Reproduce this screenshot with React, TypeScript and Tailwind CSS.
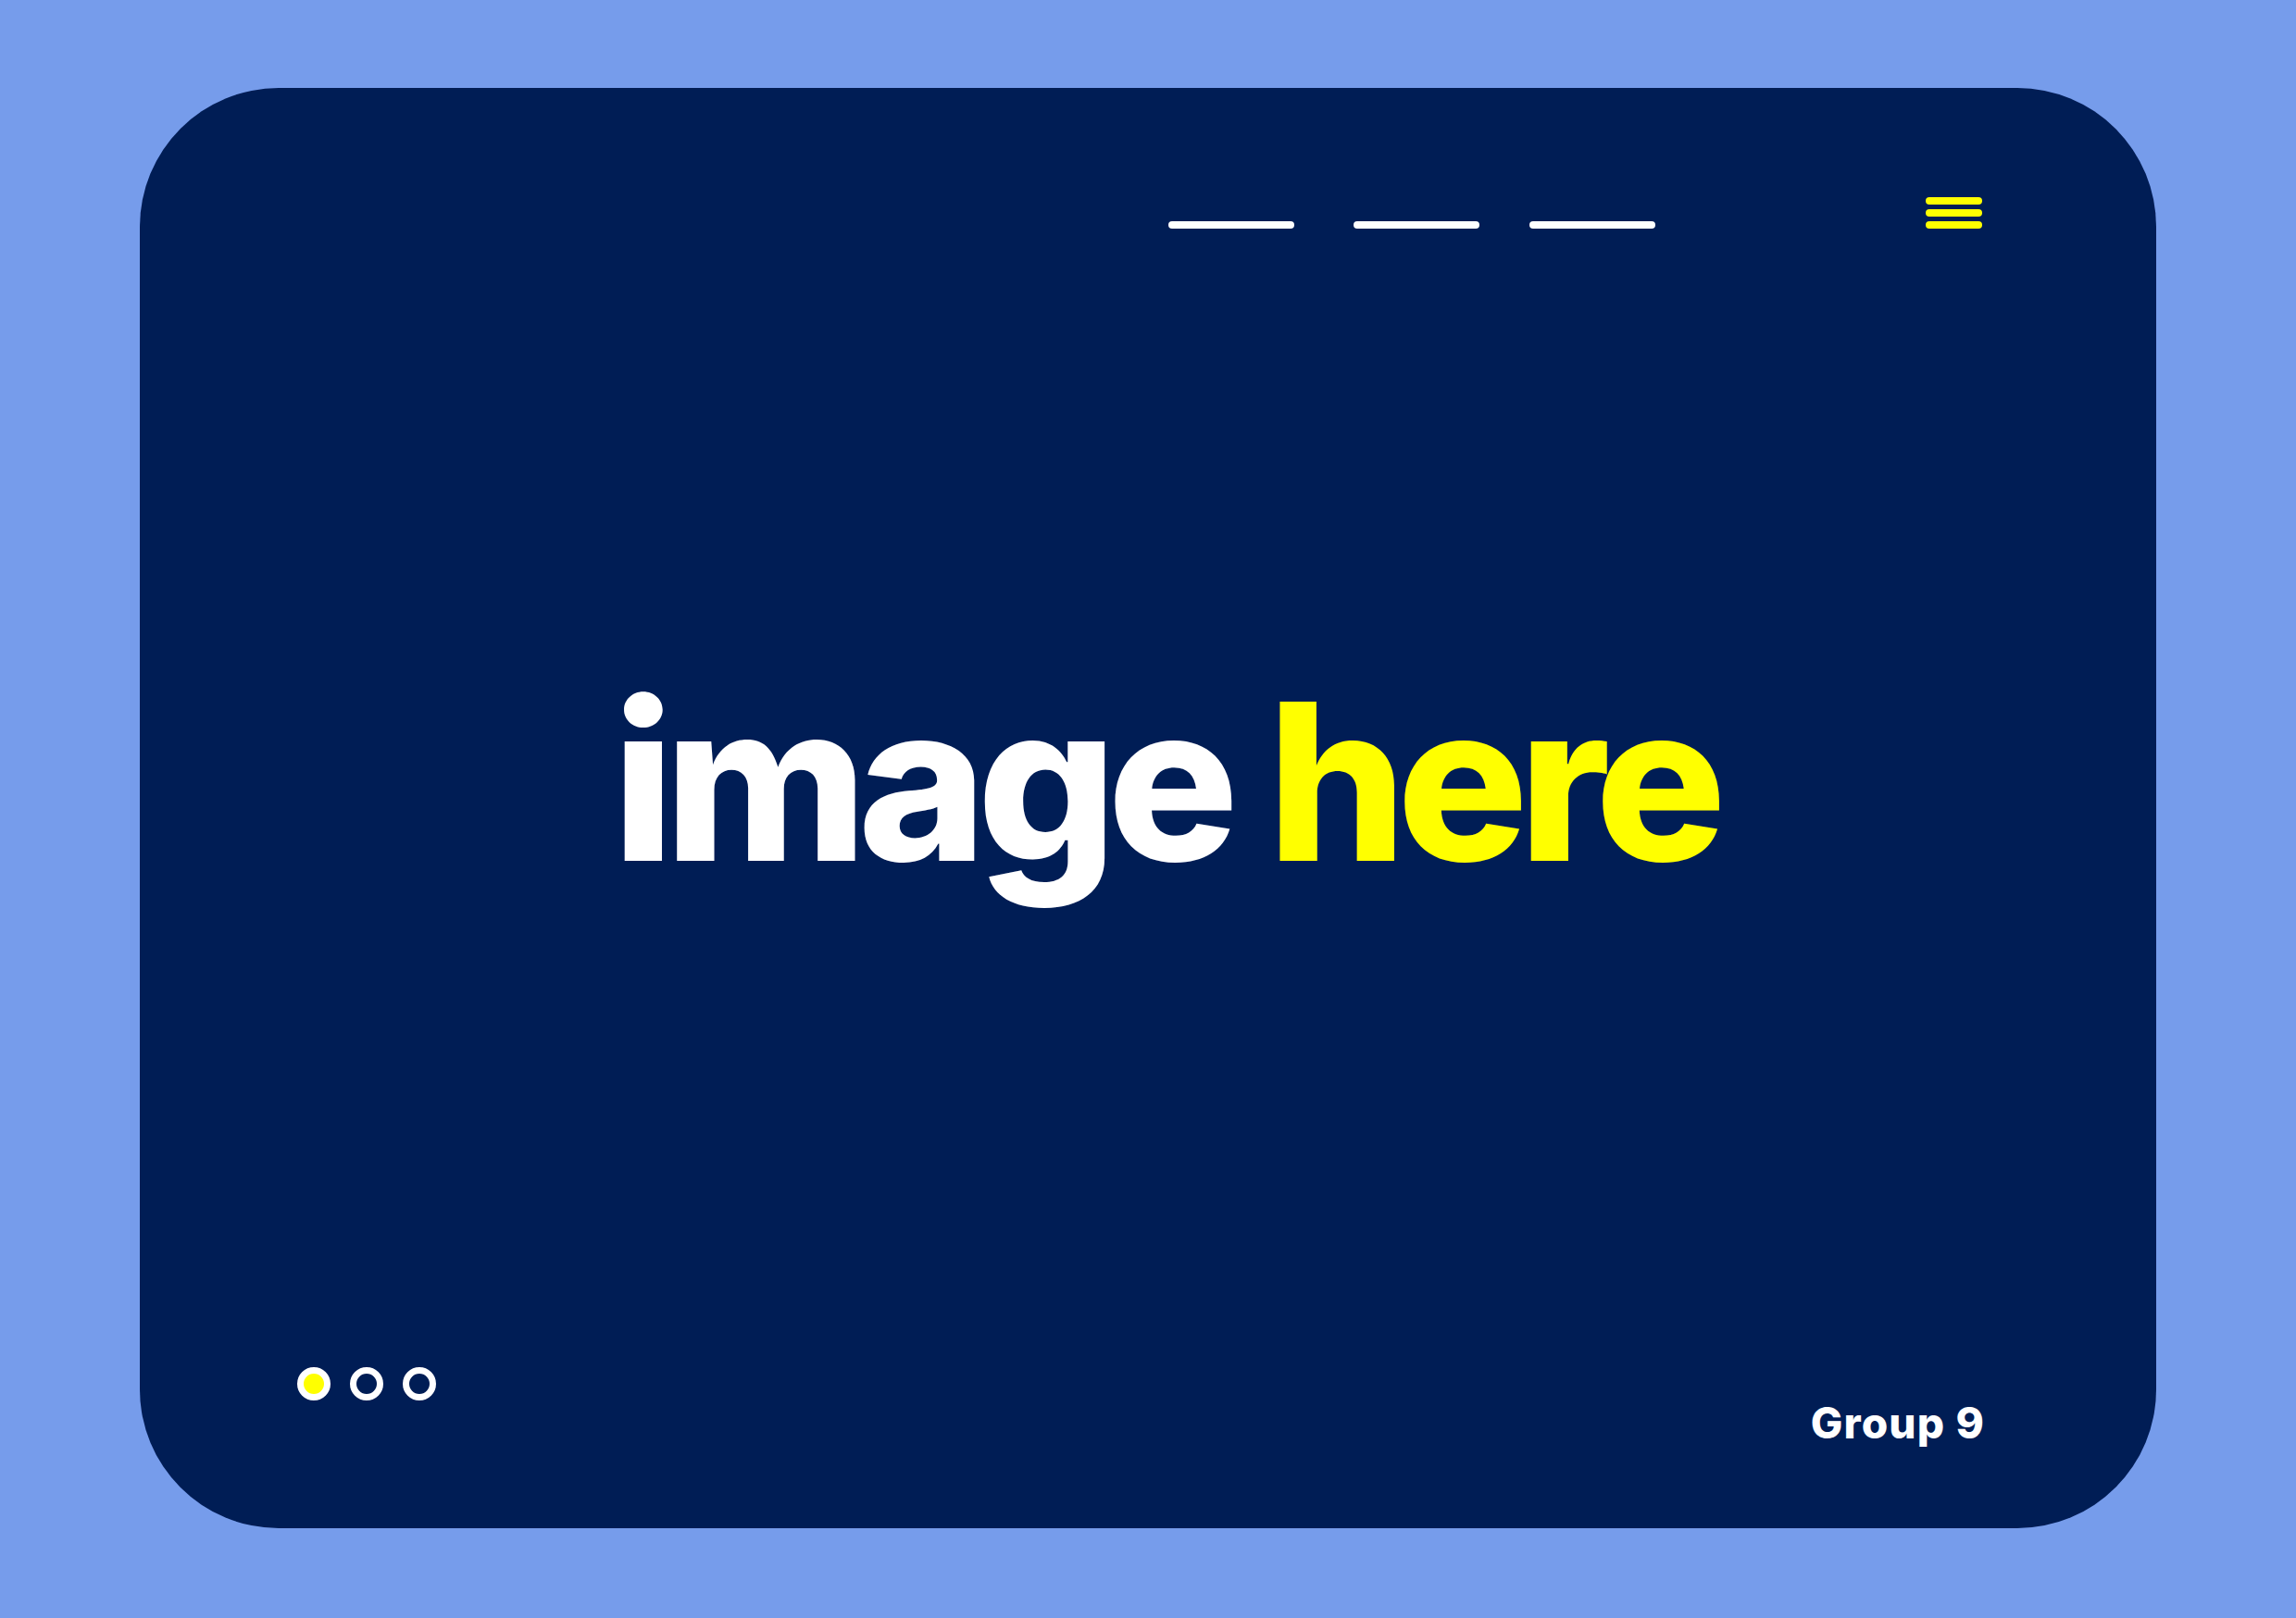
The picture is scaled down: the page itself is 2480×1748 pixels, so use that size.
export default function App() {
  return (
    <div className="w-[2480px] h-[1748px] bg-[#769ceb] pl-[151px] pr-[151px] pt-[95px] pb-[97px]" style={{ fontFamily: "Inter, 'Liberation Sans', sans-serif" }}>
      <div className="w-full h-full bg-[#001d55] rounded-[150px] flex flex-col">
        <header className="flex justify-end items-end pt-[118px] pr-[188px]">
          <nav className="flex items-end">
            <span className="block w-[136px] h-[8px] rounded-full bg-white" />
            <span className="block w-[136px] h-[8px] rounded-full bg-white ml-[64px]" />
            <span className="block w-[136px] h-[8px] rounded-full bg-white ml-[54px]" />
          </nav>
          <div className="ml-[292px] flex flex-col gap-[5px] w-[61px]">
            <span className="block h-[8px] rounded-full bg-[#ffff00]" />
            <span className="block h-[8px] rounded-full bg-[#ffff00]" />
            <span className="block h-[8px] rounded-full bg-[#ffff00]" />
          </div>
        </header>
        <main className="flex-1 flex justify-center items-start pt-[479px] pl-[36px]">
          <h1 className="text-[236px] leading-none font-extrabold tracking-[-0.043em] whitespace-nowrap">
            <span className="text-white">image</span>{" "}
            <span className="text-[#ffff00]">here</span>
          </h1>
        </main>
        <footer className="flex justify-between items-start pl-[170px] pr-[185px] h-[174px]">
          <div className="flex gap-[21px]">
            <span className="block w-[36px] h-[36px] rounded-full border-[7px] border-white bg-[#ffff00]" />
            <span className="block w-[36px] h-[36px] rounded-full border-[7px] border-white" />
            <span className="block w-[36px] h-[36px] rounded-full border-[7px] border-white" />
          </div>
          <p className="mt-[37px] text-[46px] leading-none font-extrabold text-white tracking-[0.025em]">Group 9</p>
        </footer>
      </div>
    </div>
  );
}
